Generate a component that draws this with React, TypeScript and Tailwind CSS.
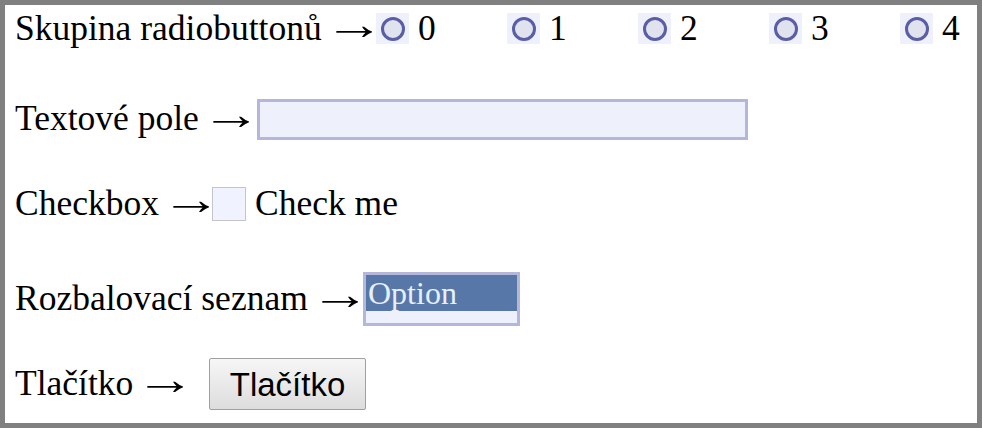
import React from "react";

const serif = "font-['Liberation_Serif',_'Times_New_Roman',_serif]";

function Label({ text, width }: { text: string; width: string }) {
  return (
    <span className={`${width} flex shrink-0 items-center whitespace-nowrap`}>
      {text}
      <span className="ml-[2px] inline-block w-[38px]">
        <span className="inline-block origin-left -translate-y-[4px] scale-x-[1.7] scale-y-[1.25]">→</span>
      </span>
    </span>
  );
}

function Radio({ label }: { label: string }) {
  return (
    <div className="flex w-[131px] shrink-0 items-center">
      <span className="flex h-[31px] w-[33px] items-center justify-center bg-[#eef0fb]">
        <span className="h-[24px] w-[24px] rounded-full border-[3px] border-[#5b5ea6] bg-[#e0e2ee]" />
      </span>
      <span className="ml-[9px]">{label}</span>
    </div>
  );
}

export default function App() {
  return (
    <div className="h-[428px] w-[982px] overflow-hidden border-[5px] border-[#808080] bg-white">
      <div className={`${serif} flex flex-col pl-[10px] text-[35.5px] leading-none text-black`}>
        <div className="mt-[8px] flex h-[31px] items-center">
          <Label text="Skupina radiobuttonů" width="w-[361px]" />
          {["0", "1", "2", "3", "4"].map((n) => (
            <Radio key={n} label={n} />
          ))}
        </div>

        <div className="mt-[54px] flex h-[42px] items-center">
          <Label text="Textové pole" width="w-[242px]" />
          <div className="h-[41px] w-[491px] border-[3px] border-[#b4b7d9] bg-[#eef0fb]" />
        </div>

        <div className="mt-[47px] flex h-[34px] items-center">
          <Label text="Checkbox" width="w-[197px]" />
          <div className="h-[34px] w-[34px] border border-[#c4c4cc] bg-[#f0f3ff]" />
          <span className="ml-[9px]">Check me</span>
        </div>

        <div className="mt-[51px] flex h-[54px] items-center">
          <Label text="Rozbalovací seznam" width="w-[348px]" />
          <div className="flex h-[54px] w-[157px] flex-col border-[3px] border-[#b4b7d9] bg-[#eef0fb]">
            <div className="flex h-[36px] items-center bg-[#5677a8] pl-[2px] text-[32px] text-[#e8efff]">
              Option
            </div>
          </div>
        </div>

        <div className="mt-[32px] flex h-[52px] items-center">
          <Label text="Tlačítko" width="w-[194px]" />
          <button className="h-[52px] w-[157px] rounded-[2px] border border-[#a0a0a0] bg-gradient-to-b from-[#f6f6f6] to-[#dddddd] font-['Liberation_Sans',_Arial,_sans-serif] text-[33px] text-black">
            Tlačítko
          </button>
        </div>
      </div>
    </div>
  );
}
